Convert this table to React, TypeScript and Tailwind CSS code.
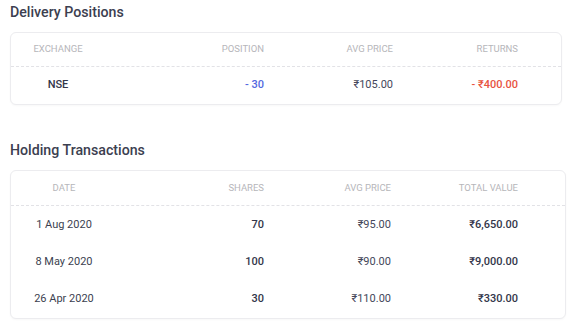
import React from 'react';

const font = { fontFamily: 'Roboto, "Noto Sans", sans-serif' };

type Position = { exchange: string; position: string; avgPrice: string; returns: string };
type Txn = { date: string; shares: string; avgPrice: string; total: string };

const positions: Position[] = [
  { exchange: 'NSE', position: '- 30', avgPrice: '₹105.00', returns: '- ₹400.00' },
];

const txns: Txn[] = [
  { date: '1 Aug 2020', shares: '70', avgPrice: '₹95.00', total: '₹6,650.00' },
  { date: '8 May 2020', shares: '100', avgPrice: '₹90.00', total: '₹9,000.00' },
  { date: '26 Apr 2020', shares: '30', avgPrice: '₹110.00', total: '₹330.00' },
];

const headCell = 'text-[9.5px] uppercase text-[#b6b6ba]';

export default function App() {
  return (
    <div className="min-h-screen bg-white px-[10px] pt-[2px]" style={font}>
      <h2 className="text-[14.2px] leading-[20px] font-medium text-[#3c4050] mb-[10px]">Delivery Positions</h2>
      <div className="w-[552px] rounded-[6px] border border-[#ececef] bg-white shadow-[0_1px_2px_rgba(0,0,0,0.03)]">
        <div className="grid grid-cols-[94px_159px_129px_125px] h-[34px] items-center border-b border-dashed border-[#e2e2e6]">
          <div className={`${headCell} text-center`}>Exchange</div>
          <div className={`${headCell} text-right`}>Position</div>
          <div className={`${headCell} text-right`}>Avg Price</div>
          <div className={`${headCell} text-right`}>Returns</div>
        </div>
        {positions.map((p) => (
          <div key={p.exchange} className="grid grid-cols-[94px_159px_129px_125px] h-[37px] items-center text-[11px]">
            <div className="text-center font-medium text-[#33364a]">{p.exchange}</div>
            <div className="text-right font-medium text-[#5468e0]">{p.position}</div>
            <div className="text-right text-[#44475a]">{p.avgPrice}</div>
            <div className="text-right font-medium text-[#e8533f]">{p.returns}</div>
          </div>
        ))}
      </div>

      <h2 className="mt-[35px] text-[14.2px] leading-[20px] font-medium text-[#3c4050] mb-[10px]">Holding Transactions</h2>
      <div className="w-[556px] rounded-[6px] border border-[#ececef] bg-white shadow-[0_1px_2px_rgba(0,0,0,0.03)]">
        <div className="grid grid-cols-[106px_147px_127px_127px] h-[35px] items-center border-b border-dashed border-[#e2e2e6]">
          <div className={`${headCell} text-center`}>Date</div>
          <div className={`${headCell} text-right`}>Shares</div>
          <div className={`${headCell} text-right`}>Avg Price</div>
          <div className={`${headCell} text-right`}>Total Value</div>
        </div>
        <div className="pt-[1px]">
          {txns.map((t) => (
            <div key={t.date} className="grid grid-cols-[106px_147px_127px_127px] h-[37px] items-center text-[11px]">
              <div className="text-center text-[#3c3f50]">{t.date}</div>
              <div className="text-right font-medium text-[#33364a]">{t.shares}</div>
              <div className="text-right text-[#44475a]">{t.avgPrice}</div>
              <div className="text-right font-medium text-[#33364a]">{t.total}</div>
            </div>
          ))}
        </div>
      </div>
    </div>
  );
}
